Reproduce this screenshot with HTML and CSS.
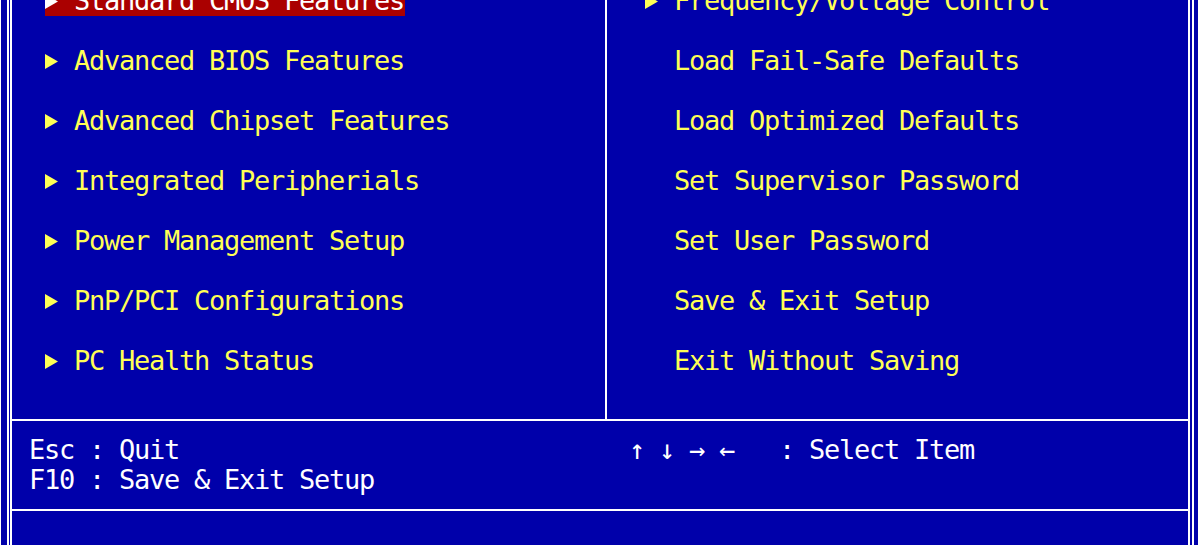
FILE: index.html
```html
<!DOCTYPE html>
<html lang="en">
<head>
    <meta charset="UTF-8">
    <meta name="viewport" content="width=device-width, initial-scale=1.0">
    <title>CMOS Setup Utility</title>
    <link rel="stylesheet" href="styles.css">
</head>
<body>
    <div class="frame">
        <div class="frame-inner">
            <div class="box">
                <div class="menu">
                    <ul class="items items-left">
                        <li class="item selected"><span class="arrow"><svg width="13" height="15" viewBox="0 0 13 15"><path d="M0 0L13 7.5L0 15Z"/></svg></span>Standard CMOS Features</li>
                        <li class="item"><span class="arrow"><svg width="13" height="15" viewBox="0 0 13 15"><path d="M0 0L13 7.5L0 15Z"/></svg></span>Advanced BIOS Features</li>
                        <li class="item"><span class="arrow"><svg width="13" height="15" viewBox="0 0 13 15"><path d="M0 0L13 7.5L0 15Z"/></svg></span>Advanced Chipset Features</li>
                        <li class="item"><span class="arrow"><svg width="13" height="15" viewBox="0 0 13 15"><path d="M0 0L13 7.5L0 15Z"/></svg></span>Integrated Peripherials</li>
                        <li class="item"><span class="arrow"><svg width="13" height="15" viewBox="0 0 13 15"><path d="M0 0L13 7.5L0 15Z"/></svg></span>Power Management Setup</li>
                        <li class="item"><span class="arrow"><svg width="13" height="15" viewBox="0 0 13 15"><path d="M0 0L13 7.5L0 15Z"/></svg></span>PnP/PCI Configurations</li>
                        <li class="item"><span class="arrow"><svg width="13" height="15" viewBox="0 0 13 15"><path d="M0 0L13 7.5L0 15Z"/></svg></span>PC Health Status</li>
                    </ul>
                    <ul class="items items-right">
                        <li class="item"><span class="arrow"><svg width="13" height="15" viewBox="0 0 13 15"><path d="M0 0L13 7.5L0 15Z"/></svg></span>Frequency/Voltage Control</li>
                        <li class="item"><span class="arrow"></span>Load Fail-Safe Defaults</li>
                        <li class="item"><span class="arrow"></span>Load Optimized Defaults</li>
                        <li class="item"><span class="arrow"></span>Set Supervisor Password</li>
                        <li class="item"><span class="arrow"></span>Set User Password</li>
                        <li class="item"><span class="arrow"></span>Save &amp; Exit Setup</li>
                        <li class="item"><span class="arrow"></span>Exit Without Saving</li>
                    </ul>
                </div>

                <div class="keys">
                    <div>
                        <div class="key-line">Esc : Quit</div>
                        <div class="key-line">F10 : Save &amp; Exit Setup</div>
                    </div>
                    <div class="key-line">↑ ↓ → ←   : Select Item</div>
                </div>

                <div class="status"></div>
            </div>
        </div>
    </div>
</body>
</html>
```

FILE: styles.css
```css
body {
    margin: 0;
    height: 545px;
    overflow: hidden;
    background-color: #0000aa;
    font-family: "DejaVu Sans Mono", monospace;
    font-size: 27px;
    letter-spacing: -1.25px;
    line-height: 30px;
}
.frame {
    height: 545px;
    box-sizing: border-box;
    border-left: 1px solid #fff;
    border-right: 2px solid #fff;
    padding: 0 4px 0 6px;
}
.frame-inner {
    height: 100%;
    box-sizing: border-box;
    border-left: 2px solid #fff;
    border-right: 2px solid #fff;
    padding: 0 2px 0 1px;
}
.box {
    height: 100%;
    box-sizing: border-box;
    border-left: 2px solid #fff;
    border-right: 2px solid #fff;
    display: flex;
    flex-direction: column;
}
.menu {
    height: 419px;
    flex-shrink: 0;
    display: grid;
    grid-template-columns: 595px 1fr;
}
.items {
    list-style: none;
    margin: -14px 0 0;
    padding: 0;
    display: flex;
    flex-direction: column;
    gap: 30px;
    color: #ffff55;
}
.items-left {
    border-right: 2px solid #fff;
    padding-left: 33px;
}
.items-right {
    padding-left: 38px;
}
.item {
    height: 30px;
    display: flex;
    align-items: center;
    align-self: flex-start;
    white-space: pre;
    padding-right: 1px;
}
.arrow {
    width: 29px;
    height: 30px;
    display: flex;
    align-items: center;
    flex-shrink: 0;
}
.arrow svg {
    fill: currentColor;
    margin-top: 1px;
}
.selected {
    background-color: #aa0000;
    color: #fff;
}
.keys {
    height: 92px;
    flex-shrink: 0;
    box-sizing: border-box;
    border-top: 2px solid #fff;
    border-bottom: 2px solid #fff;
    padding: 14px 0 0 17px;
    display: grid;
    grid-template-columns: 600px auto;
    align-items: start;
    color: #fff;
}
.key-line {
    white-space: pre;
}
.status {
    flex: 1;
}
```
